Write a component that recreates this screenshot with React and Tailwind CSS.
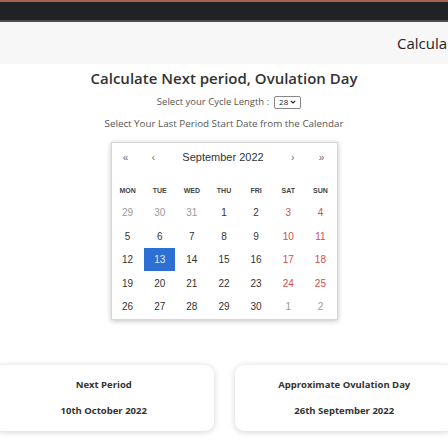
// Period & ovulation calculator — header, calendar picker, result cards

const WEEKDAYS = ["MON", "TUE", "WED", "THU", "FRI", "SAT", "SUN"];

const WEEKS = [
  [29, 30, 31, 1, 2, 3, 4],
  [5, 6, 7, 8, 9, 10, 11],
  [12, 13, 14, 15, 16, 17, 18],
  [19, 20, 21, 22, 23, 24, 25],
  [26, 27, 28, 29, 30, 1, 2],
];

function dayClass(w, d, day) {
  const outside = (w === 0 && day > 20) || (w === 4 && day < 10);
  if (outside) return "text-[#9a9a9a]";
  if (d >= 5) return "text-[#d2504b]";
  return "text-[#333]";
}

function Calendar() {
  return (
    <div className="w-[227px] border border-[#d6d6d6] bg-white shadow-[0_1px_5px_rgba(0,0,0,0.25)] font-['Liberation_Sans',Arial,sans-serif]">
      <div className="flex h-[29px] items-center text-[#666]">
        <span className="w-[28px] text-center text-[10px]">«</span>
        <span className="w-[28px] text-center text-[10px]">‹</span>
        <span className="w-[112px] text-center text-[11px] text-[#333]">September 2022</span>
        <span className="w-[28px] text-center text-[10px]">›</span>
        <span className="w-[30px] text-center text-[10px]">»</span>
      </div>
      <div className="mt-[9px] grid h-[20px] grid-cols-7 items-center">
        {WEEKDAYS.map((d) => (
          <span key={d} className="text-center text-[7px] font-bold text-[#444]">
            {d}
          </span>
        ))}
      </div>
      {WEEKS.map((week, w) => (
        <div key={w} className="grid h-[23.5px] grid-cols-7 items-center">
          {week.map((day, d) =>
            w === 2 && day === 13 ? (
              <div key={d} className="flex justify-center">
                <span className="flex h-[23px] w-[31px] items-center justify-center bg-[#2e6fd6] text-[10px] text-[#e6eeff]">
                  {day}
                </span>
              </div>
            ) : (
              <span key={d} className={`text-center text-[10px] ${dayClass(w, d, day)}`}>
                {day}
              </span>
            )
          )}
        </div>
      ))}
    </div>
  );
}

function ResultCard({ title, value }) {
  return (
    <div className="flex flex-col items-center rounded-[9px] bg-white pt-[14px] pb-[14px] shadow-[0_1px_6px_rgba(0,0,0,0.18)]">
      <span className="text-[9.5px] font-bold leading-[12px] text-[#333]">{title}</span>
      <span className="mt-[14px] text-[9.5px] font-bold leading-[12px] text-[#333]">{value}</span>
    </div>
  );
}

export default function App() {
  return (
    <div className="h-[448px] w-[448px] overflow-hidden bg-white font-['Open_Sans','Noto_Sans',sans-serif]">
      <div className="h-[2px] bg-[#a5604f]" />
      <div className="h-[18px] bg-[#202226]" />
      <div className="h-[2px] bg-[#4b4d51]" />
      <div className="flex h-[42px] items-center overflow-hidden whitespace-nowrap bg-[#f7f7f7] pl-[397px] text-[15px] text-[#212529]">
        Calcula
      </div>

      <div className="flex flex-col items-center">
        <h1 className="mt-[4px] text-[15px] font-semibold leading-[20px] text-[#333]">
          Calculate Next period, Ovulation Day
        </h1>
        <div className="mt-[7px] flex h-[14px] items-center gap-[5px] pl-[10px] text-[9.5px] text-[#555]">
          <span>Select your Cycle Length :</span>
          <span className="flex h-[13px] w-[27px] items-center justify-center gap-[2px] rounded-[2px] border border-[#888] text-[8px] text-[#222]">
            28
            <svg width="6" height="4" viewBox="0 0 6 4">
              <path d="M0.8 0.8 L3 3 L5.2 0.8" fill="none" stroke="#222" strokeWidth="1.2" />
            </svg>
          </span>
        </div>
        <p className="mt-[9px] text-[9.8px] leading-[12px] text-[#555]">
          Select Your Last Period Start Date from the Calendar
        </p>
        <div className="mt-[12px]">
          <Calendar />
        </div>
      </div>

      <div className="-ml-[6px] mt-[45px] grid w-[460px] grid-cols-2 gap-[21px]">
        <ResultCard title="Next Period" value="10th October 2022" />
        <ResultCard title="Approximate Ovulation Day" value="26th September 2022" />
      </div>
      <div className="mt-[17px] h-[1px] bg-[#a0705f]" />
    </div>
  );
}
